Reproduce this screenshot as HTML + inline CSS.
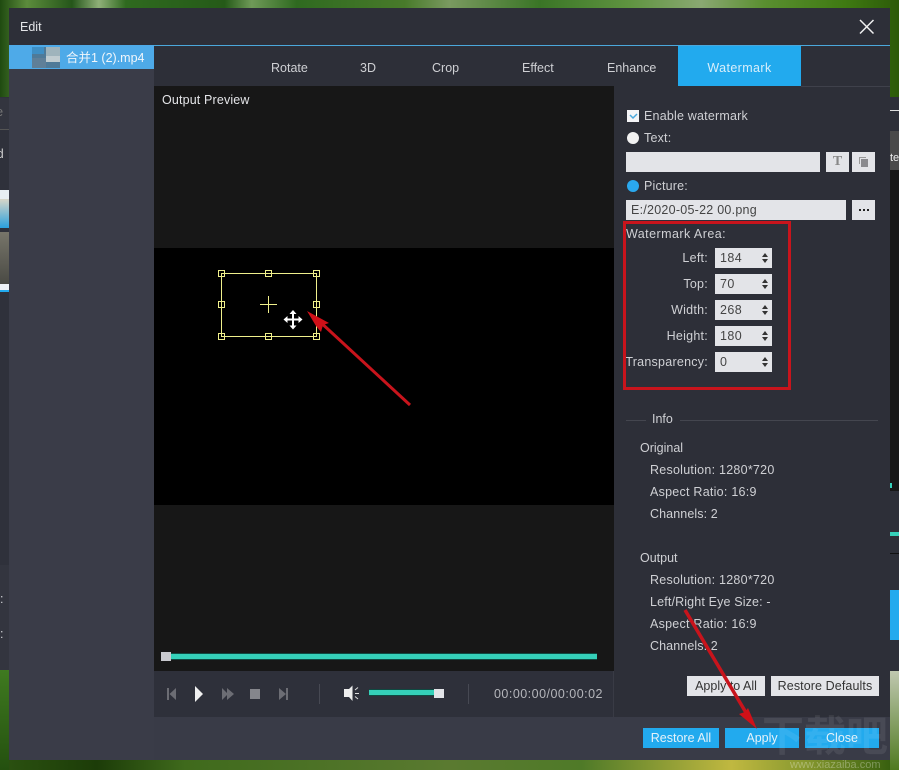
<!DOCTYPE html>
<html><head><meta charset="utf-8"><style>
html,body{margin:0;padding:0}
#p{position:relative;width:899px;height:770px;overflow:hidden;background:#2a4d12;font-family:"Liberation Sans","DejaVu Sans","Noto Sans CJK SC",sans-serif;font-size:12.5px;color:#cfd0d4}
#p div{position:absolute;box-sizing:border-box}
.t{white-space:nowrap;line-height:16px;height:16px}
.l{letter-spacing:.25px}
.r{text-align:right;width:100px;letter-spacing:.25px}
.f{background:#e3e4e8}
.s{background:#e3e4e8;left:715px;width:57px;height:20px;color:#444;padding-left:5px;line-height:20px;letter-spacing:.4px}
.s:after{content:"";position:absolute;left:47px;top:5px;border:3.5px solid transparent;border-top:0;border-bottom:4px solid #333}
.s:before{content:"";position:absolute;left:47px;top:11px;border:3.5px solid transparent;border-bottom:0;border-top:4px solid #333}
.b{background:#e3e4e8;color:#333;text-align:center;height:20px;line-height:20px;top:676px;white-space:nowrap}
.a{background:#22aaee;color:#e4f2fa;text-align:center;height:20px;line-height:20px;top:728px;white-space:nowrap}
.h{width:7px;height:7px;border:1px solid #f0f08c;background:transparent}
</style></head><body><div id="p">
<div style="left:0;top:0;width:899px;height:100px;background:linear-gradient(90deg,#1f4a10 0,#5c8c3c 3%,#25561a 8%,#8fb078 11%,#2f6a1f 14%,#255a18 25%,#6f9a58 28%,#2f6a20 33%,#487a2a 45%,#7a9a60 50%,#3a7526 60%,#5f9440 70%,#8aa872 78%,#5a8f30 85%,#3f7a12 94%,#2c5a08 100%)"></div>
<div style="left:0;top:97px;width:9px;height:573px;background:#2f313b"></div>
<div style="left:0;top:98px;width:9px;height:32px;background:#33353f"></div>
<div style="left:0;top:129px;width:9px;height:1px;background:#555"></div>
<div class="t" style="left:-8px;top:104px;color:#777">re</div>
<div class="t" style="left:-6px;top:146px;color:#ccc">ld</div>
<div style="left:0;top:190px;width:9px;height:9px;background:#e8eef2"></div>
<div style="left:0;top:199px;width:9px;height:29px;background:linear-gradient(#d8d6c8,#2aa0dd)"></div>
<div style="left:0;top:232px;width:9px;height:52px;background:linear-gradient(#77756a,#4a4a44)"></div>
<div style="left:0;top:284px;width:9px;height:8px;background:#eef2f6;border-bottom:2px solid #22aaee"></div>
<div style="left:0;top:565px;width:9px;height:105px;background:#33353f"></div>
<div class="t" style="left:-7px;top:591px">e:</div>
<div class="t" style="left:-7px;top:626px">n:</div>
<div style="left:0;top:670px;width:9px;height:100px;background:linear-gradient(#3f7a20,#24500f)"></div>
<div style="left:9px;top:760px;width:881px;height:10px;background:linear-gradient(90deg,#2a5010,#1c3c08 10%,#3f6a1c 20%,#5a7a30 50%,#4f7a28 65%,#c0b840 82%,#8a9a30 90%,#38600f)"></div>
<div style="left:890px;top:97px;width:9px;height:574px;background:#2d2f38"></div>
<div style="left:890px;top:110px;width:9px;height:1px;background:#ddd"></div>
<div style="left:890px;top:131px;width:9px;height:39px;background:#4a4a4a"></div>
<div class="t" style="left:890px;top:150px;color:#eee;font-size:11px">te</div>
<div style="left:890px;top:170px;width:9px;height:321px;background:#171717"></div>
<div style="left:890px;top:483px;width:2px;height:5px;background:#35d0b9"></div>
<div style="left:890px;top:532px;width:9px;height:4px;background:#35d0b9"></div>
<div style="left:890px;top:553px;width:9px;height:1px;background:#111"></div>
<div style="left:890px;top:590px;width:9px;height:50px;background:#22aaee"></div>
<div style="left:890px;top:671px;width:9px;height:99px;background:linear-gradient(#c0c8b0,#4f7a20)"></div>
<!-- dialog -->
<div style="left:9px;top:8px;width:881px;height:752px;background:#2d2f38"></div>
<div style="left:9px;top:45px;width:145px;height:715px;background:#3a3c48"></div>
<div style="left:154px;top:717px;width:736px;height:43px;background:#393b47"></div>
<div style="left:154px;top:45px;width:736px;height:1px;background:#4ba8dc"></div>
<div style="left:9px;top:45px;width:145px;height:24px;background:#4eaae8"></div>
<div style="left:32px;top:47px;width:28px;height:21px;background:#4f7a98"></div>
<div style="left:46px;top:47px;width:14px;height:9px;background:#9fb4bc"></div>
<div style="left:32px;top:47px;width:12px;height:7px;background:#3f8fc4"></div>
<div style="left:46px;top:56px;width:14px;height:6px;background:#c0ccd0"></div>
<div style="left:32px;top:58px;width:14px;height:10px;background:#5f7f98"></div>
<div class="t" style="left:66px;top:50px;color:#f0f6fb">合并1 (2).mp4</div>
<div class="t" style="left:20px;top:19px;color:#e4e5e8">Edit</div>
<svg style="position:absolute;left:858px;top:18px" width="18" height="18"><path d="M2 2L15.500 15.500M15.500 2L2 15.500" stroke="#f0f0f0" stroke-width="1.500" fill="none"/></svg>
<div class="t" style="left:271px;top:60px">Rotate</div>
<div class="t" style="left:360px;top:60px">3D</div>
<div class="t" style="left:432px;top:60px">Crop</div>
<div class="t" style="left:522px;top:60px">Effect</div>
<div class="t" style="left:607px;top:60px">Enhance</div>
<div style="left:678px;top:46px;width:123px;height:40px;background:#22aaee;color:#d8eefa;text-align:center;line-height:44px;letter-spacing:.4px">Watermark</div>
<div style="left:801px;top:86px;width:89px;height:1px;background:#3f414b"></div>
<!-- preview -->
<div style="left:154px;top:86px;width:460px;height:585px;background:#171717"></div>
<div style="left:154px;top:248px;width:460px;height:257px;background:#000"></div>
<div class="t" style="left:162px;top:92px;color:#e4e5e8;letter-spacing:.15px">Output Preview</div>
<div style="left:221px;top:273px;width:96px;height:64px;border:1px solid #f0f08c"></div>
<div class="h" style="left:218px;top:270px"></div><div class="h" style="left:265px;top:270px"></div><div class="h" style="left:313px;top:270px"></div>
<div class="h" style="left:218px;top:301px"></div><div class="h" style="left:313px;top:301px"></div>
<div class="h" style="left:218px;top:333px"></div><div class="h" style="left:265px;top:333px"></div><div class="h" style="left:313px;top:333px"></div>
<div style="left:260px;top:304px;width:17px;height:1px;background:#f0f08c"></div>
<div style="left:268px;top:296px;width:1px;height:17px;background:#f0f08c"></div>
<svg style="position:absolute;left:282px;top:308px" width="22" height="24"><path d="M11 2L7.500 6H10V10.500H5.500V8L1.500 11.500L5.500 15V12.500H10V17.500H7.500L11 21.500L14.500 17.500H12V12.500H16.500V15L20.500 11.500L16.500 8V10.500H12V6H14.500Z" fill="#fff"/></svg>
<!-- slider -->
<div style="left:166px;top:653px;width:431px;height:7px;background:#0f4a42"></div>
<div style="left:166px;top:654px;width:431px;height:5px;background:#35d0b9"></div>
<div style="left:161px;top:652px;width:10px;height:9px;background:#c8c9ce"></div>
<!-- controls -->
<div style="left:154px;top:671px;width:460px;height:46px;background:#2e303a"></div>
<svg style="position:absolute;left:160px;top:680px" width="140" height="28">
<path d="M7 8H9V20H7ZM9.500 14L16 8V20Z" fill="#6c6d74"/>
<path d="M35 6L43 14L35 22Z" fill="#f0f0f0"/>
<path d="M62 8L68 14L62 20ZM67 8L74 14L67 20Z" fill="#6c6d74"/>
<rect x="90" y="9" width="10" height="10" fill="#85868c"/>
<path d="M119 8L126 14L119 20ZM126 8H128V20H126Z" fill="#6c6d74"/>
</svg>
<div style="left:319px;top:684px;width:1px;height:20px;background:#474953"></div>
<svg style="position:absolute;left:342px;top:684px" width="20" height="20"><path d="M2 5H7V13H2ZM7 5L10.500 1.500V17L7 13Z" fill="#eee"/><path d="M13 6L16 3.500M13 9.500H17M13 12.500L16 15" stroke="#ddd" stroke-width="1"/></svg>
<div style="left:369px;top:689px;width:68px;height:7px;background:#0f4a42"></div>
<div style="left:369px;top:690px;width:68px;height:5px;background:#35d0b9"></div>
<div style="left:434px;top:689px;width:10px;height:9px;background:#e3e4e8"></div>
<div style="left:468px;top:684px;width:1px;height:20px;background:#474953"></div>
<div class="t" style="left:494px;top:686px;color:#b5b6bb;letter-spacing:.48px">00:00:00/00:00:02</div>
<div style="left:613px;top:671px;width:1px;height:46px;background:#393b45"></div>
<!-- right panel -->
<div style="left:627px;top:110px;width:12px;height:12px;background:#f4f4f6"></div>
<svg style="position:absolute;left:627px;top:110px" width="12" height="12"><path d="M3 5L6 8L10 4" stroke="#4ba8dc" stroke-width="1.500" fill="none"/></svg>
<div class="t" style="left:644px;top:108px;letter-spacing:.2px">Enable watermark</div>
<div style="left:627px;top:132px;width:12px;height:12px;border-radius:50%;background:#f2f2f2"></div>
<div class="t" style="left:644px;top:130px;letter-spacing:.2px">Text:</div>
<div class="f" style="left:626px;top:152px;width:194px;height:20px"></div>
<div class="f" style="left:826px;top:152px;width:23px;height:20px"></div>
<div style="left:826px;top:152px;width:23px;height:20px;text-align:center;line-height:20px;font-family:'Liberation Serif',serif;font-weight:bold;font-size:14px;color:#888">T</div>
<div class="f" style="left:852px;top:152px;width:23px;height:20px"></div>
<div style="left:859px;top:157px;width:7px;height:7px;border-left:1px solid #999;border-top:1px solid #999"></div>
<div style="left:861px;top:159px;width:7px;height:8px;background:#8a8a8e"></div>
<div style="left:627px;top:180px;width:12px;height:12px;border-radius:50%;background:#2aa8ee"></div>
<div class="t" style="left:644px;top:178px;letter-spacing:.2px">Picture:</div>
<div class="f t l" style="left:626px;top:200px;width:220px;height:20px;line-height:21px;padding-left:5px;color:#444">E:/2020-05-22 00.png</div>
<div class="f" style="left:852px;top:200px;width:23px;height:20px"></div>
<div style="left:859px;top:209px;width:2px;height:2px;background:#222"></div>
<div style="left:863px;top:209px;width:2px;height:2px;background:#222"></div>
<div style="left:867px;top:209px;width:2px;height:2px;background:#222"></div>
<div class="t" style="left:626px;top:226px;letter-spacing:.45px">Watermark Area:</div>
<div class="t r" style="left:608px;top:250px">Left:</div><div class="s" style="top:248px">184</div>
<div class="t r" style="left:608px;top:276px">Top:</div><div class="s" style="top:274px">70</div>
<div class="t r" style="left:608px;top:302px">Width:</div><div class="s" style="top:300px">268</div>
<div class="t r" style="left:608px;top:328px">Height:</div><div class="s" style="top:326px">180</div>
<div class="t r" style="left:608px;top:354px">Transparency:</div><div class="s" style="top:352px">0</div>
<div style="left:623px;top:221px;width:168px;height:169px;border:3px solid #c8141c"></div>
<div style="left:626px;top:420px;width:20px;height:1px;background:#44464f"></div>
<div class="t" style="left:652px;top:411px">Info</div>
<div style="left:680px;top:420px;width:198px;height:1px;background:#44464f"></div>
<div class="t" style="left:640px;top:440px">Original</div>
<div class="t l" style="left:650px;top:462px">Resolution: 1280*720</div>
<div class="t l" style="left:650px;top:484px">Aspect Ratio: 16:9</div>
<div class="t" style="left:650px;top:506px;letter-spacing:.1px">Channels: 2</div>
<div class="t" style="left:640px;top:550px">Output</div>
<div class="t l" style="left:650px;top:572px">Resolution: 1280*720</div>
<div class="t" style="left:650px;top:594px;letter-spacing:.15px">Left/Right Eye Size: -</div>
<div class="t l" style="left:650px;top:616px">Aspect Ratio: 16:9</div>
<div class="t" style="left:650px;top:638px;letter-spacing:.1px">Channels: 2</div>
<div class="b" style="left:687px;width:78px">Apply to All</div>
<div class="b" style="left:771px;width:108px;letter-spacing:.1px">Restore Defaults</div>
<div class="a" style="left:643px;width:76px">Restore All</div>
<div class="a" style="left:725px;width:74px">Apply</div>
<div class="a" style="left:805px;width:74px">Close</div>
<!-- watermark -->
<div style="left:762px;top:712px;width:130px;height:44px;color:rgba(255,255,255,.08);font:bold 42px/44px 'Noto Sans CJK SC',sans-serif;white-space:nowrap;overflow:hidden">下载吧</div>
<div class="t" style="left:790px;top:757px;color:rgba(255,255,255,.3);font-size:11px">www.xiazaiba.com</div>
<!-- arrows -->
<svg style="position:absolute;left:0;top:0;pointer-events:none" width="899" height="770">
<path d="M410 405L318 320" stroke="#c8141c" stroke-width="3" fill="none"/>
<path d="M307 311L329 323L323 325L321 332L316 326Z" fill="#d01018"/>
<path d="M685 610L748 716" stroke="#c8141c" stroke-width="3.500" fill="none"/>
<path d="M757 729L739 714L745 712L748 708Z" fill="#d01018"/>
</svg>
</div></body></html>
